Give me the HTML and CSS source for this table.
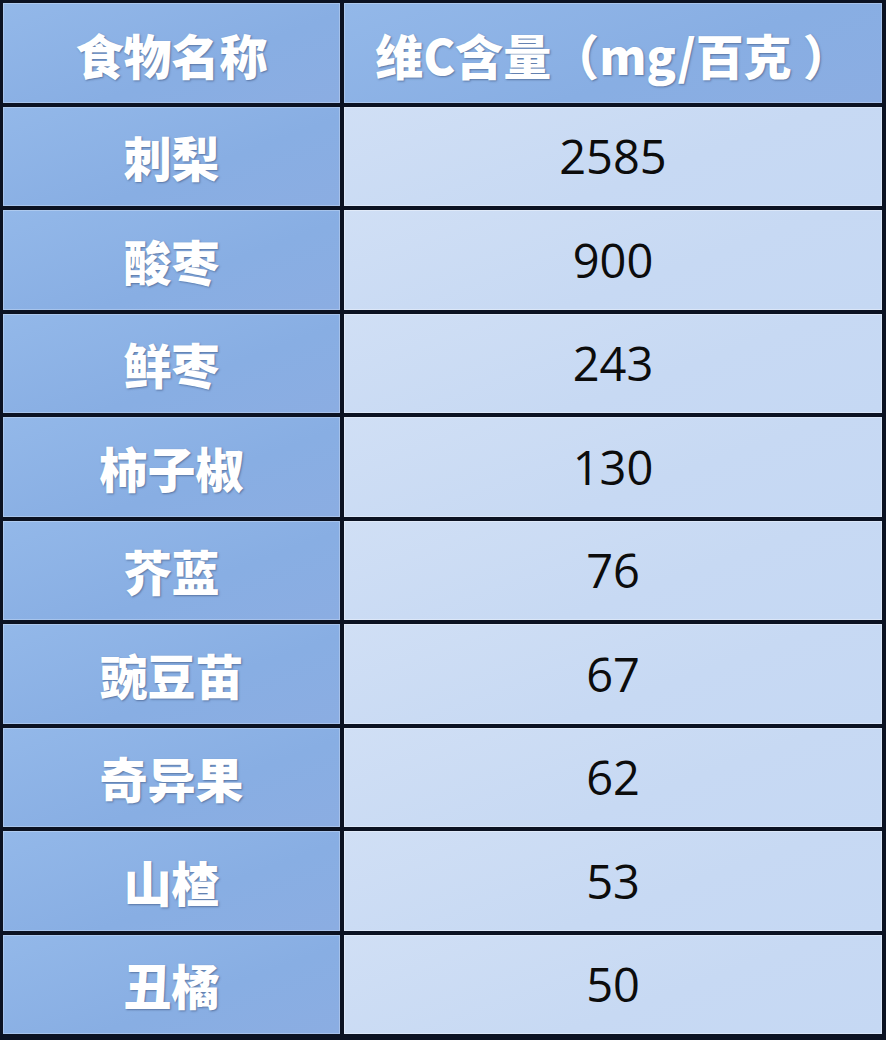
FILE: index.html
```html
<!DOCTYPE html>
<html lang="zh">
<head>
<meta charset="utf-8">
<title>维C含量</title>
<link rel="stylesheet" href="styles.css">
</head>
<body>
<div class="table">
  <div class="cell head">食物名称</div>
  <div class="cell head">维C含量（mg/百克 ）</div>
  <div class="cell name">刺梨</div><div class="cell val">2585</div>
  <div class="cell name">酸枣</div><div class="cell val">900</div>
  <div class="cell name">鲜枣</div><div class="cell val">243</div>
  <div class="cell name">柿子椒</div><div class="cell val">130</div>
  <div class="cell name">芥蓝</div><div class="cell val">76</div>
  <div class="cell name">豌豆苗</div><div class="cell val">67</div>
  <div class="cell name">奇异果</div><div class="cell val">62</div>
  <div class="cell name">山楂</div><div class="cell val">53</div>
  <div class="cell name">丑橘</div><div class="cell val">50</div>
</div>
</body>
</html>
```
FILE: styles.css
```css
html, body {
  margin: 0;
  padding: 0;
  background: #0b1222;
}
.table {
  box-sizing: border-box;
  width: 886px;
  height: 1040px;
  padding: 3px 4px 6px 3px;
  background: #0b1222;
  display: grid;
  grid-template-columns: 337px 1fr;
  grid-template-rows: repeat(10, 1fr);
  gap: 4px;
}
.cell {
  display: flex;
  align-items: center;
  justify-content: center;
  box-sizing: border-box;
}
.head, .name {
  background: linear-gradient(160deg, #93b8e9 0%, #88aee3 60%, #8badE2 100%);
  color: #ffffff;
  font-family: "Noto Sans CJK SC", "Noto Sans", sans-serif;
  font-weight: 900;
  font-size: 48px;
  text-shadow: 1px 1px 2px rgba(50, 70, 110, 0.55);
  box-shadow: inset 0 0 0 1px rgba(255,255,255,0.25);
}
.head {
  padding-top: 3px;
}
.val {
  background: linear-gradient(160deg, #d0dff5 0%, #c7d9f3 60%, #c5d8f3 100%);
  color: #0c0c0c;
  font-family: "Open Sans", "Noto Sans", sans-serif;
  font-size: 47px;
  font-weight: 400;
  box-shadow: inset 0 0 0 1px rgba(255,255,255,0.35);
}
```
